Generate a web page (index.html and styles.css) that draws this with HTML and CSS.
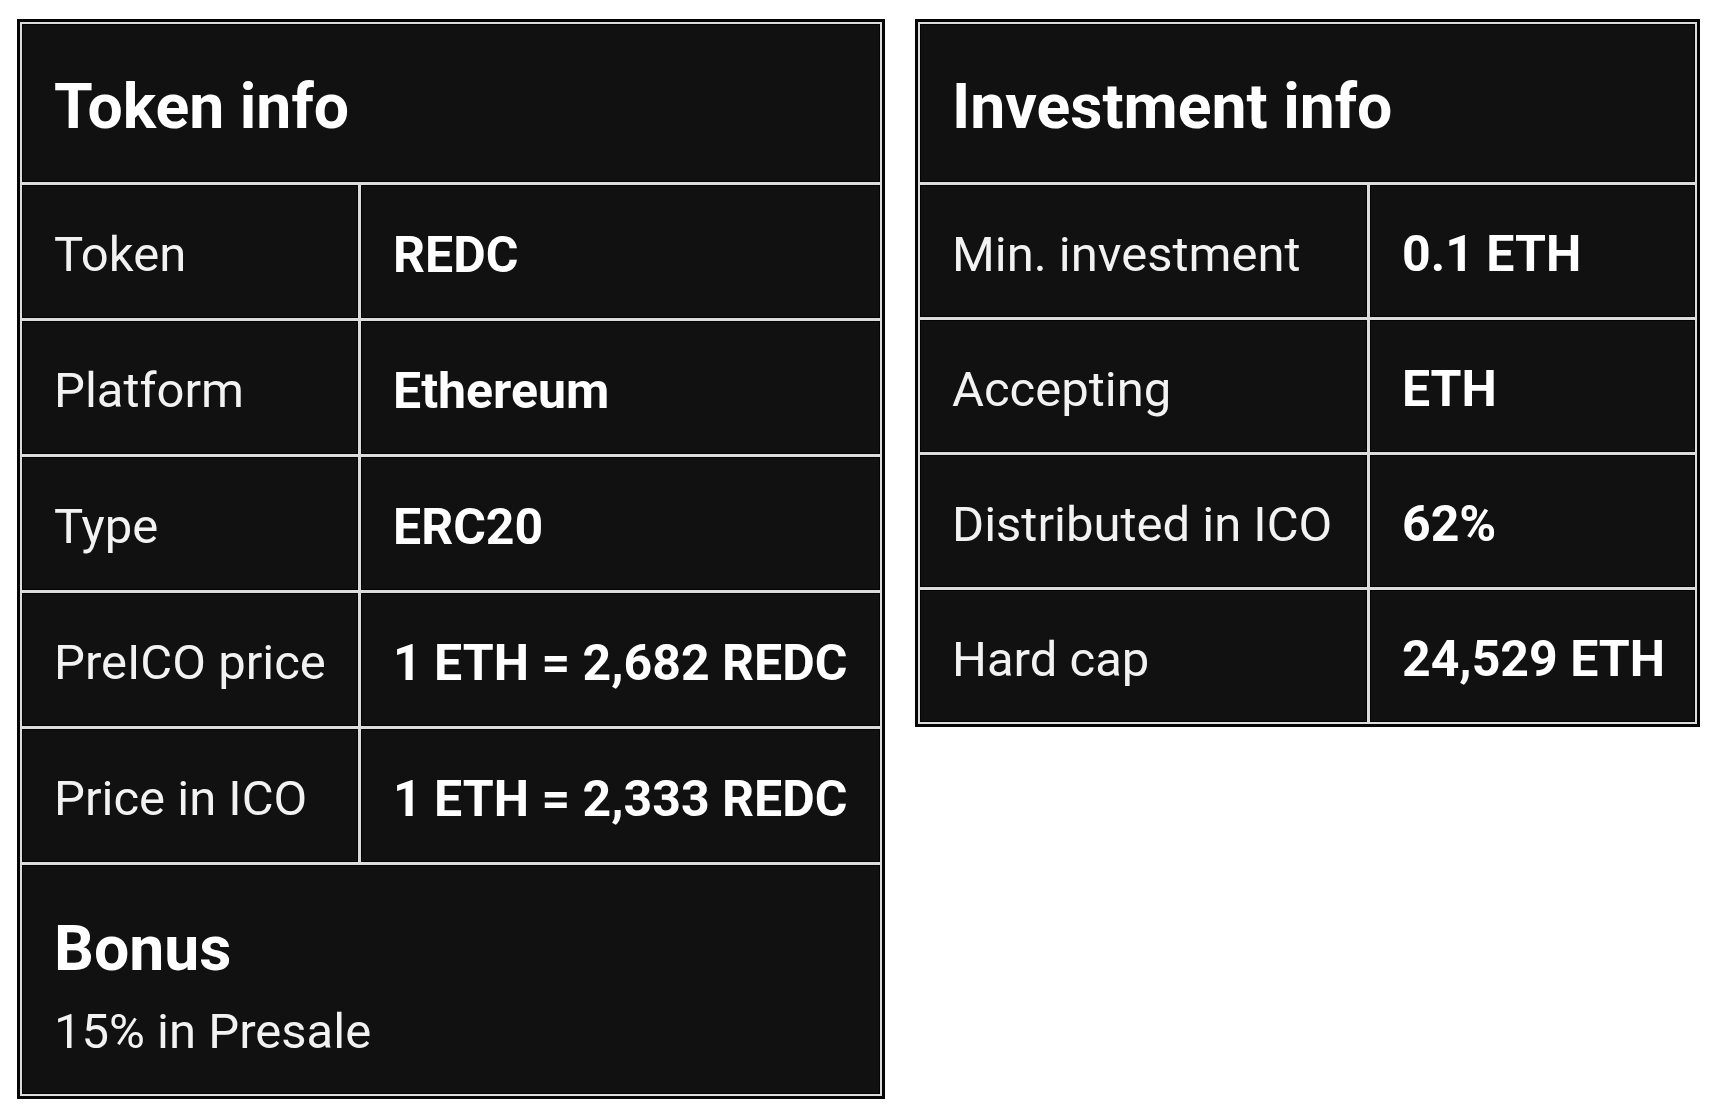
FILE: index.html
```html
<!DOCTYPE html>
<html lang="en">
<head>
<meta charset="utf-8">
<title>Token info</title>
<link rel="stylesheet" href="styles.css">
</head>
<body>
<div class="page">
  <section class="card card-token">
    <div class="cell head span">Token info</div>
    <div class="cell label">Token</div>
    <div class="cell value">REDC</div>
    <div class="cell label">Platform</div>
    <div class="cell value">Ethereum</div>
    <div class="cell label">Type</div>
    <div class="cell value">ERC20</div>
    <div class="cell label">PreICO price</div>
    <div class="cell value">1 ETH = 2,682 REDC</div>
    <div class="cell label">Price in ICO</div>
    <div class="cell value">1 ETH = 2,333 REDC</div>
    <div class="cell bonus span">
      <div class="bonus-title">Bonus</div>
      <div class="bonus-text">15% in Presale</div>
    </div>
  </section>
  <section class="card card-invest">
    <div class="cell head span">Investment info</div>
    <div class="cell label">Min. investment</div>
    <div class="cell value">0.1 ETH</div>
    <div class="cell label">Accepting</div>
    <div class="cell value">ETH</div>
    <div class="cell label">Distributed in ICO</div>
    <div class="cell value">62%</div>
    <div class="cell label">Hard cap</div>
    <div class="cell value">24,529 ETH</div>
  </section>
</div>
</body>
</html>
```
FILE: styles.css
```css
* { box-sizing: border-box; }
html, body { margin: 0; padding: 0; background: #fff; }
body { font-family: Roboto, "Liberation Sans", sans-serif; }

.page {
  display: flex;
  align-items: flex-start;
  gap: 30px;
  padding: 19px 0 0 17px;
}

.card {
  display: grid;
  gap: 3px;
  padding: 2px;
  border: 3px solid #050505;
  background: #dcdcdc;
}

.card-token {
  width: 868px;
  grid-template-columns: 336px 519px;
  grid-template-rows: 158px repeat(5, 133px) 229px;
}

.card-invest {
  width: 785px;
  grid-template-columns: 447px 325px;
  grid-template-rows: 158px repeat(4, 132px);
}

.cell {
  background: #111;
  border: 1px solid #030303;
  color: #fff;
  display: flex;
  align-items: center;
  padding-left: 31px;
  padding-top: 6px;
  white-space: nowrap;
}

.span { grid-column: 1 / -1; }

.head {
  font-size: 62.5px;
  font-weight: 700;
  padding-top: 6px;
}

.label {
  font-size: 49px;
  font-weight: 400;
  color: #f2f2f2;
}

.value {
  font-size: 50px;
  font-weight: 700;
  padding-left: 31px;
}

.bonus {
  flex-direction: column;
  align-items: flex-start;
  justify-content: flex-start;
  padding-top: 47px;
}

.bonus-title {
  font-size: 62.5px;
  font-weight: 700;
  line-height: 72px;
}

.bonus-text {
  font-size: 49px;
  font-weight: 400;
  line-height: 60px;
  margin-top: 17px;
  color: #f2f2f2;
}
```
